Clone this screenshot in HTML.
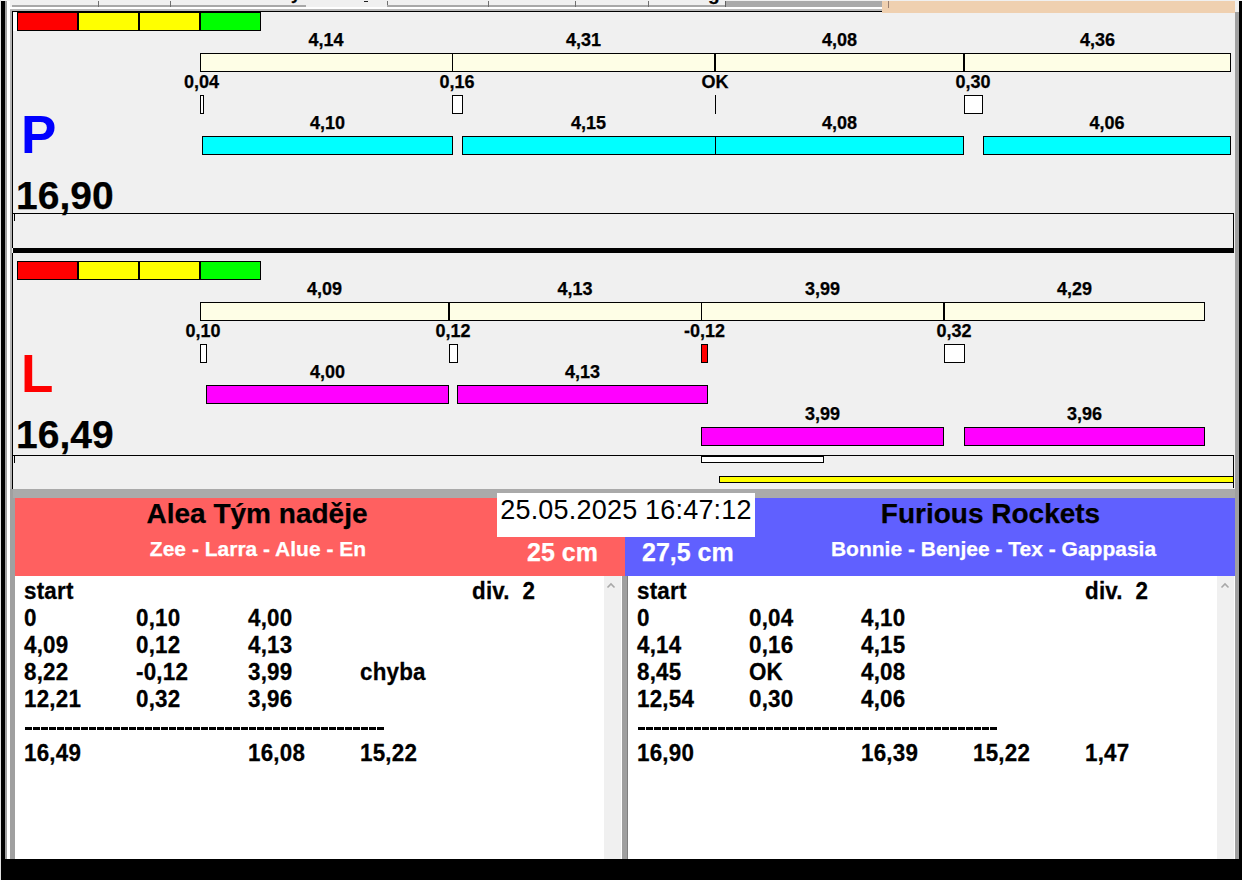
<!DOCTYPE html>
<html><head><meta charset="utf-8">
<style>
html,body{margin:0;padding:0;}
body{width:1242px;height:880px;overflow:hidden;position:relative;background:#F0F0F0;font-family:"Liberation Sans",sans-serif;}
.a{position:absolute;}
.b{position:absolute;box-sizing:border-box;border:1px solid #000;}
.t{position:absolute;white-space:nowrap;line-height:1;font-weight:bold;color:#000;-webkit-text-stroke:0.25px currentColor;}
</style></head><body>
<div class="a" style="left:0px;top:0px;width:1px;height:880px;background:#e0e0e0;"></div>
<div class="a" style="left:1px;top:1px;width:4px;height:879px;background:#000;"></div>
<div class="a" style="left:5px;top:1px;width:2px;height:858px;background:#a0a0a0;"></div>
<div class="a" style="left:7px;top:1px;width:3px;height:858px;background:#fff;"></div>
<div class="a" style="left:10px;top:7px;width:2px;height:482px;background:#b4b4b4;"></div>
<div class="a" style="left:12px;top:11px;width:1px;height:237px;background:#000;"></div>
<div class="a" style="left:12px;top:253px;width:1px;height:236px;background:#000;"></div>
<div class="a" style="left:10px;top:489px;width:5px;height:370px;background:#a0a0a0;"></div>
<div class="a" style="left:1235px;top:12px;width:4px;height:847px;background:#a0a0a0;"></div>
<div class="a" style="left:1239px;top:1px;width:3px;height:879px;background:#000;"></div>
<div class="a" style="left:10px;top:0px;width:1225px;height:11px;background:#f0f0f0;"></div>
<div class="a" style="left:12px;top:5px;width:86px;height:2px;background:#a8a8a8;"></div>
<div class="a" style="left:98px;top:1px;width:1px;height:6px;background:#707070;"></div>
<div class="a" style="left:99px;top:5px;width:71px;height:2px;background:#a8a8a8;"></div>
<div class="a" style="left:170px;top:1px;width:1px;height:6px;background:#707070;"></div>
<div class="a" style="left:171px;top:5px;width:135px;height:2px;background:#a8a8a8;"></div>
<div class="a" style="left:387px;top:1px;width:1px;height:6px;background:#707070;"></div>
<div class="a" style="left:387px;top:5px;width:101px;height:2px;background:#a8a8a8;"></div>
<div class="a" style="left:488px;top:1px;width:1px;height:6px;background:#707070;"></div>
<div class="a" style="left:489px;top:5px;width:86px;height:2px;background:#a8a8a8;"></div>
<div class="a" style="left:575px;top:1px;width:1px;height:6px;background:#707070;"></div>
<div class="a" style="left:576px;top:5px;width:72px;height:2px;background:#a8a8a8;"></div>
<div class="a" style="left:648px;top:1px;width:1px;height:6px;background:#707070;"></div>
<div class="a" style="left:649px;top:5px;width:76px;height:2px;background:#a8a8a8;"></div>
<div class="a" style="left:725px;top:1px;width:1px;height:6px;background:#707070;"></div>
<div class="a" style="left:725px;top:1px;width:157px;height:6px;background:#aaaaaa;"></div>
<div class="a" style="left:725px;top:1px;width:1px;height:6px;background:#606060;"></div>
<div class="a" style="left:10px;top:7px;width:872px;height:2px;background:#ffffff;"></div>
<div class="a" style="left:10px;top:9px;width:872px;height:2px;background:#b8b8b8;"></div>
<div class="a" style="left:12px;top:11px;width:870px;height:1px;background:#000;"></div>
<div class="a" style="left:882px;top:1px;width:353px;height:12px;background:#efd0b0;"></div>
<div class="a" style="left:888px;top:1px;width:1px;height:7px;background:#9a8070;"></div>
<div class="t" style="left:291px;top:-14px;font-size:17px;">y</div>
<div class="t" style="left:708px;top:-16px;font-size:19px;">g</div>
<div class="a" style="left:364px;top:1px;width:4px;height:1px;background:#202020;"></div>
<div class="a" style="left:13px;top:12px;width:4px;height:19px;background:#ffffff;"></div>
<div class="b" style="left:17px;top:12px;width:61px;height:19px;background:#ff0000;"></div>
<div class="b" style="left:78px;top:12px;width:61px;height:19px;background:#ffff00;"></div>
<div class="b" style="left:139px;top:12px;width:61px;height:19px;background:#ffff00;"></div>
<div class="b" style="left:200px;top:12px;width:61px;height:19px;background:#00ff00;"></div>
<div class="b" style="left:200px;top:53px;width:1031px;height:19px;background:#fefee6;"></div>
<div class="a" style="left:452px;top:53px;width:1px;height:19px;background:#000;"></div>
<div class="a" style="left:714px;top:53px;width:2px;height:19px;background:#000;"></div>
<div class="a" style="left:963px;top:53px;width:2px;height:19px;background:#000;"></div>
<div class="t" style="left:26.0px;top:31px;width:600px;text-align:center;font-size:18px;">4,14</div>
<div class="t" style="left:283.5px;top:31px;width:600px;text-align:center;font-size:18px;">4,31</div>
<div class="t" style="left:539.5px;top:31px;width:600px;text-align:center;font-size:18px;">4,08</div>
<div class="t" style="left:797.5px;top:31px;width:600px;text-align:center;font-size:18px;">4,36</div>
<div class="t" style="left:-98.5px;top:73px;width:600px;text-align:center;font-size:18px;">0,04</div>
<div class="t" style="left:157.0px;top:73px;width:600px;text-align:center;font-size:18px;">0,16</div>
<div class="t" style="left:415.0px;top:73px;width:600px;text-align:center;font-size:18px;">OK</div>
<div class="t" style="left:673.0px;top:73px;width:600px;text-align:center;font-size:18px;">0,30</div>
<div class="b" style="left:200px;top:95px;width:4px;height:19px;background:#fff;"></div>
<div class="b" style="left:452px;top:95px;width:11px;height:19px;background:#fff;"></div>
<div class="a" style="left:715px;top:95px;width:1px;height:19px;background:#000;"></div>
<div class="b" style="left:964px;top:95px;width:19px;height:19px;background:#fff;"></div>
<div class="b" style="left:202px;top:136px;width:251px;height:19px;background:#00ffff;"></div>
<div class="b" style="left:462px;top:136px;width:254px;height:19px;background:#00ffff;"></div>
<div class="b" style="left:715px;top:136px;width:249px;height:19px;background:#00ffff;"></div>
<div class="b" style="left:983px;top:136px;width:248px;height:19px;background:#00ffff;"></div>
<div class="t" style="left:27.5px;top:114px;width:600px;text-align:center;font-size:18px;">4,10</div>
<div class="t" style="left:288.5px;top:114px;width:600px;text-align:center;font-size:18px;">4,15</div>
<div class="t" style="left:539.5px;top:114px;width:600px;text-align:center;font-size:18px;">4,08</div>
<div class="t" style="left:807.0px;top:114px;width:600px;text-align:center;font-size:18px;">4,06</div>
<div class="t" style="left:21px;top:108px;font-size:53px;color:#0000ff;-webkit-text-stroke:0">P</div>
<div class="t" style="left:16px;top:176px;font-size:39px;">16,90</div>
<div class="a" style="left:13px;top:213px;width:1221px;height:1px;background:#000;"></div>
<div class="a" style="left:1233px;top:213px;width:1px;height:35px;background:#000;"></div>
<div class="a" style="left:14px;top:214px;width:1px;height:7px;background:#000;"></div>
<div class="a" style="left:13px;top:248px;width:1221px;height:5px;background:#000;"></div>
<div class="b" style="left:17px;top:261px;width:61px;height:19px;background:#ff0000;"></div>
<div class="b" style="left:78px;top:261px;width:61px;height:19px;background:#ffff00;"></div>
<div class="b" style="left:139px;top:261px;width:61px;height:19px;background:#ffff00;"></div>
<div class="b" style="left:200px;top:261px;width:61px;height:19px;background:#00ff00;"></div>
<div class="b" style="left:200px;top:302px;width:1005px;height:19px;background:#fefee6;"></div>
<div class="a" style="left:448px;top:302px;width:2px;height:19px;background:#000;"></div>
<div class="a" style="left:701px;top:302px;width:1px;height:19px;background:#000;"></div>
<div class="a" style="left:943px;top:302px;width:2px;height:19px;background:#000;"></div>
<div class="t" style="left:24.5px;top:280px;width:600px;text-align:center;font-size:18px;">4,09</div>
<div class="t" style="left:275.0px;top:280px;width:600px;text-align:center;font-size:18px;">4,13</div>
<div class="t" style="left:522.5px;top:280px;width:600px;text-align:center;font-size:18px;">3,99</div>
<div class="t" style="left:774.5px;top:280px;width:600px;text-align:center;font-size:18px;">4,29</div>
<div class="t" style="left:-97.0px;top:322px;width:600px;text-align:center;font-size:18px;">0,10</div>
<div class="t" style="left:153.0px;top:322px;width:600px;text-align:center;font-size:18px;">0,12</div>
<div class="t" style="left:404.5px;top:322px;width:600px;text-align:center;font-size:18px;">-0,12</div>
<div class="t" style="left:654.0px;top:322px;width:600px;text-align:center;font-size:18px;">0,32</div>
<div class="b" style="left:200px;top:344px;width:7px;height:19px;background:#fff;"></div>
<div class="b" style="left:449px;top:344px;width:9px;height:19px;background:#fff;"></div>
<div class="b" style="left:701px;top:344px;width:7px;height:19px;background:#ff0000;"></div>
<div class="b" style="left:944px;top:344px;width:21px;height:19px;background:#fff;"></div>
<div class="b" style="left:206px;top:385px;width:243px;height:19px;background:#ff00ff;"></div>
<div class="b" style="left:457px;top:385px;width:251px;height:19px;background:#ff00ff;"></div>
<div class="b" style="left:701px;top:427px;width:243px;height:19px;background:#ff00ff;"></div>
<div class="b" style="left:964px;top:427px;width:241px;height:19px;background:#ff00ff;"></div>
<div class="t" style="left:27.5px;top:363px;width:600px;text-align:center;font-size:18px;">4,00</div>
<div class="t" style="left:282.5px;top:363px;width:600px;text-align:center;font-size:18px;">4,13</div>
<div class="t" style="left:522.5px;top:405px;width:600px;text-align:center;font-size:18px;">3,99</div>
<div class="t" style="left:784.5px;top:405px;width:600px;text-align:center;font-size:18px;">3,96</div>
<div class="t" style="left:21px;top:347px;font-size:53px;color:#ff0000;-webkit-text-stroke:0">L</div>
<div class="t" style="left:16px;top:415px;font-size:39px;">16,49</div>
<div class="a" style="left:13px;top:455px;width:1221px;height:1px;background:#000;"></div>
<div class="a" style="left:1233px;top:455px;width:1px;height:33px;background:#000;"></div>
<div class="a" style="left:14px;top:456px;width:1px;height:7px;background:#000;"></div>
<div class="b" style="left:701px;top:456px;width:123px;height:7px;background:#fff;"></div>
<div class="b" style="left:719px;top:476px;width:515px;height:7px;background:#ffff00;"></div>
<div class="a" style="left:13px;top:489px;width:1222px;height:9px;background:#aaaaaa;"></div>
<div class="a" style="left:15px;top:498px;width:610px;height:78px;background:#ff6060;"></div>
<div class="a" style="left:625px;top:498px;width:610px;height:78px;background:#6060ff;"></div>
<div class="a" style="left:497px;top:493px;width:258px;height:44px;background:#fff;"></div>
<div class="t" style="left:497px;top:497px;font-size:27px;font-weight:normal;-webkit-text-stroke:0;width:258px;text-align:center;letter-spacing:0.2px">25.05.2025 16:47:12</div>
<div class="t" style="left:-43.0px;top:500px;width:600px;text-align:center;font-size:28px;">Alea Tým naděje</div>
<div class="t" style="left:-42.0px;top:538px;width:600px;text-align:center;font-size:21px;color:#fff">Zee - Larra - Alue - En</div>
<div class="t" style="left:426px;top:540px;width:172px;text-align:right;font-size:25px;color:#fff">25 cm</div>
<div class="t" style="left:642px;top:540px;font-size:25px;color:#fff">27,5 cm</div>
<div class="t" style="left:690.5px;top:500px;width:600px;text-align:center;font-size:28px;">Furious Rockets</div>
<div class="t" style="left:693.5px;top:538px;width:600px;text-align:center;font-size:21px;color:#fff">Bonnie - Benjee - Tex - Gappasia</div>
<div class="a" style="left:15px;top:576px;width:589px;height:283px;background:#fff;"></div>
<div class="a" style="left:604px;top:576px;width:18px;height:283px;background:#f0f0f0;"></div>
<div class="a" style="left:621px;top:576px;width:1px;height:283px;background:#ffffff;"></div>
<div class="a" style="left:622px;top:576px;width:6px;height:283px;background:#a0a0a0;"></div>
<div class="a" style="left:627px;top:576px;width:1px;height:283px;background:#808080;"></div>
<div class="a" style="left:628px;top:576px;width:589px;height:283px;background:#fff;"></div>
<div class="a" style="left:1217px;top:576px;width:17px;height:283px;background:#f0f0f0;"></div>
<div class="a" style="left:1234px;top:576px;width:1px;height:283px;background:#ffffff;"></div>
<svg class="a" style="left:604px;top:580px" width="12" height="10"><path d="M3.5 7.5 L7 4 L10.5 7.5" stroke="#a8a8a8" stroke-width="1.6" fill="none"/></svg>
<svg class="a" style="left:1218px;top:580px" width="12" height="10"><path d="M3.5 7.5 L7 4 L10.5 7.5" stroke="#a8a8a8" stroke-width="1.6" fill="none"/></svg>
<div class="t" style="left:24px;top:580px;font-size:22.4px;letter-spacing:0.2px;transform:scaleY(1.08);transform-origin:0 11.5px">start</div>
<div class="t" style="left:472px;top:580px;font-size:22.4px;letter-spacing:0.2px;transform:scaleY(1.08);transform-origin:0 11.5px">div.&nbsp; 2</div>
<div class="t" style="left:24px;top:607px;font-size:22.4px;letter-spacing:0.2px;transform:scaleY(1.08);transform-origin:0 11.5px">0</div>
<div class="t" style="left:136px;top:607px;font-size:22.4px;letter-spacing:0.2px;transform:scaleY(1.08);transform-origin:0 11.5px">0,10</div>
<div class="t" style="left:248px;top:607px;font-size:22.4px;letter-spacing:0.2px;transform:scaleY(1.08);transform-origin:0 11.5px">4,00</div>
<div class="t" style="left:24px;top:634px;font-size:22.4px;letter-spacing:0.2px;transform:scaleY(1.08);transform-origin:0 11.5px">4,09</div>
<div class="t" style="left:136px;top:634px;font-size:22.4px;letter-spacing:0.2px;transform:scaleY(1.08);transform-origin:0 11.5px">0,12</div>
<div class="t" style="left:248px;top:634px;font-size:22.4px;letter-spacing:0.2px;transform:scaleY(1.08);transform-origin:0 11.5px">4,13</div>
<div class="t" style="left:24px;top:661px;font-size:22.4px;letter-spacing:0.2px;transform:scaleY(1.08);transform-origin:0 11.5px">8,22</div>
<div class="t" style="left:136px;top:661px;font-size:22.4px;letter-spacing:0.2px;transform:scaleY(1.08);transform-origin:0 11.5px">-0,12</div>
<div class="t" style="left:248px;top:661px;font-size:22.4px;letter-spacing:0.2px;transform:scaleY(1.08);transform-origin:0 11.5px">3,99</div>
<div class="t" style="left:360px;top:661px;font-size:22.4px;letter-spacing:0.2px;transform:scaleY(1.08);transform-origin:0 11.5px">chyba</div>
<div class="t" style="left:24px;top:688px;font-size:22.4px;letter-spacing:0.2px;transform:scaleY(1.08);transform-origin:0 11.5px">12,21</div>
<div class="t" style="left:136px;top:688px;font-size:22.4px;letter-spacing:0.2px;transform:scaleY(1.08);transform-origin:0 11.5px">0,32</div>
<div class="t" style="left:248px;top:688px;font-size:22.4px;letter-spacing:0.2px;transform:scaleY(1.08);transform-origin:0 11.5px">3,96</div>
<div class="a" style="left:25px;top:727px;width:359px;height:3px;background:repeating-linear-gradient(to right,#000 0 7px,transparent 7px 8px);"></div>
<div class="t" style="left:24px;top:742px;font-size:22.4px;letter-spacing:0.2px;transform:scaleY(1.08);transform-origin:0 11.5px">16,49</div>
<div class="t" style="left:248px;top:742px;font-size:22.4px;letter-spacing:0.2px;transform:scaleY(1.08);transform-origin:0 11.5px">16,08</div>
<div class="t" style="left:360px;top:742px;font-size:22.4px;letter-spacing:0.2px;transform:scaleY(1.08);transform-origin:0 11.5px">15,22</div>
<div class="t" style="left:637px;top:580px;font-size:22.4px;letter-spacing:0.2px;transform:scaleY(1.08);transform-origin:0 11.5px">start</div>
<div class="t" style="left:1085px;top:580px;font-size:22.4px;letter-spacing:0.2px;transform:scaleY(1.08);transform-origin:0 11.5px">div.&nbsp; 2</div>
<div class="t" style="left:637px;top:607px;font-size:22.4px;letter-spacing:0.2px;transform:scaleY(1.08);transform-origin:0 11.5px">0</div>
<div class="t" style="left:749px;top:607px;font-size:22.4px;letter-spacing:0.2px;transform:scaleY(1.08);transform-origin:0 11.5px">0,04</div>
<div class="t" style="left:861px;top:607px;font-size:22.4px;letter-spacing:0.2px;transform:scaleY(1.08);transform-origin:0 11.5px">4,10</div>
<div class="t" style="left:637px;top:634px;font-size:22.4px;letter-spacing:0.2px;transform:scaleY(1.08);transform-origin:0 11.5px">4,14</div>
<div class="t" style="left:749px;top:634px;font-size:22.4px;letter-spacing:0.2px;transform:scaleY(1.08);transform-origin:0 11.5px">0,16</div>
<div class="t" style="left:861px;top:634px;font-size:22.4px;letter-spacing:0.2px;transform:scaleY(1.08);transform-origin:0 11.5px">4,15</div>
<div class="t" style="left:637px;top:661px;font-size:22.4px;letter-spacing:0.2px;transform:scaleY(1.08);transform-origin:0 11.5px">8,45</div>
<div class="t" style="left:749px;top:661px;font-size:22.4px;letter-spacing:0.2px;transform:scaleY(1.08);transform-origin:0 11.5px">OK</div>
<div class="t" style="left:861px;top:661px;font-size:22.4px;letter-spacing:0.2px;transform:scaleY(1.08);transform-origin:0 11.5px">4,08</div>
<div class="t" style="left:637px;top:688px;font-size:22.4px;letter-spacing:0.2px;transform:scaleY(1.08);transform-origin:0 11.5px">12,54</div>
<div class="t" style="left:749px;top:688px;font-size:22.4px;letter-spacing:0.2px;transform:scaleY(1.08);transform-origin:0 11.5px">0,30</div>
<div class="t" style="left:861px;top:688px;font-size:22.4px;letter-spacing:0.2px;transform:scaleY(1.08);transform-origin:0 11.5px">4,06</div>
<div class="a" style="left:638px;top:727px;width:359px;height:3px;background:repeating-linear-gradient(to right,#000 0 7px,transparent 7px 8px);"></div>
<div class="t" style="left:637px;top:742px;font-size:22.4px;letter-spacing:0.2px;transform:scaleY(1.08);transform-origin:0 11.5px">16,90</div>
<div class="t" style="left:861px;top:742px;font-size:22.4px;letter-spacing:0.2px;transform:scaleY(1.08);transform-origin:0 11.5px">16,39</div>
<div class="t" style="left:973px;top:742px;font-size:22.4px;letter-spacing:0.2px;transform:scaleY(1.08);transform-origin:0 11.5px">15,22</div>
<div class="t" style="left:1085px;top:742px;font-size:22.4px;letter-spacing:0.2px;transform:scaleY(1.08);transform-origin:0 11.5px">1,47</div>
<div class="a" style="left:1px;top:859px;width:1241px;height:21px;background:#000;"></div>
</body></html>
